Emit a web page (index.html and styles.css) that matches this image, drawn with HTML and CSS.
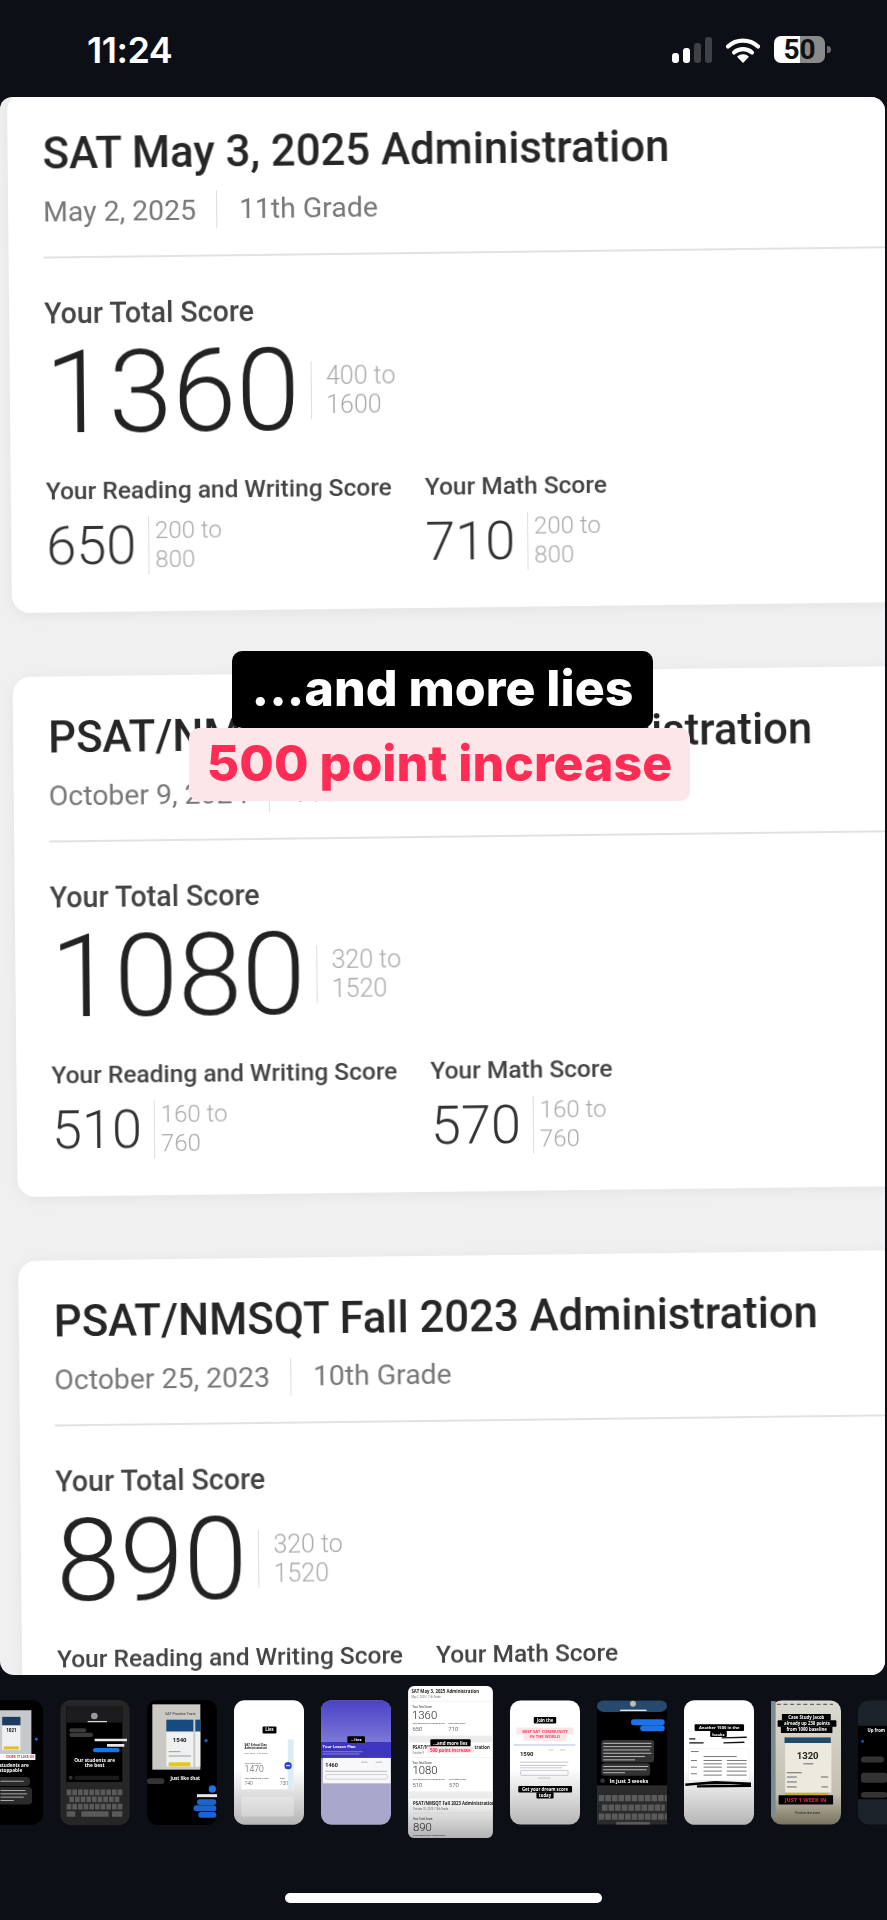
FILE: index.html
```html
<!DOCTYPE html>
<html lang="en">
<head>
    <meta charset="UTF-8">
    <meta name="viewport" content="width=device-width, initial-scale=1.0">
    <title>Story editor</title>
    <link rel="stylesheet" href="styles.css">
</head>
<body>
    <header class="status-bar">
        <span class="status-time">11:24</span>
        <div class="status-icons">
            <svg class="signal" width="40" height="26" viewBox="0 0 40 26">
                <rect x="0" y="16" width="7" height="10" rx="3" fill="#fff"/>
                <rect x="11" y="11" width="7" height="15" rx="3" fill="#fff"/>
                <rect x="22" y="6" width="7" height="20" rx="3" fill="#3e4245"/>
                <rect x="33" y="0" width="7" height="26" rx="3" fill="#3e4245"/>
            </svg>
            <svg class="wifi" width="34" height="26" viewBox="0 0 34 26">
                <path d="M2 9.5 A22 22 0 0 1 32 9.5" fill="none" stroke="#fff" stroke-width="4.2" stroke-linecap="round"/>
                <path d="M8 15.5 A14 14 0 0 1 26 15.5" fill="none" stroke="#fff" stroke-width="4.2" stroke-linecap="round"/>
                <path d="M17 26 L11 19.8 A8.5 8.5 0 0 1 23 19.8 Z" fill="#fff"/>
            </svg>
            <div class="battery">
                <div class="battery-body"><span>50</span></div>
                <div class="battery-nub"></div>
            </div>
        </div>
    </header>

    <main class="stage">
        <div class="card-list">
            <section class="card">
                <h2 class="card-title">SAT May 3, 2025 Administration</h2>
                <div class="card-meta"><span>May 2, 2025</span><span class="grade">11th Grade</span></div>
                <div class="card-rule"></div>
                <div class="total-label">Your Total Score</div>
                <div class="total-row">
                    <span class="total-num">1360</span>
                    <span class="range range-big">400 to<br>1600</span>
                </div>
                <div class="subs">
                    <div class="sub sub-rw">
                        <div class="sub-label">Your Reading and Writing Score</div>
                        <div class="sub-row"><span class="sub-num">650</span><span class="range">200 to<br>800</span></div>
                    </div>
                    <div class="sub">
                        <div class="sub-label">Your Math Score</div>
                        <div class="sub-row"><span class="sub-num">710</span><span class="range">200 to<br>800</span></div>
                    </div>
                </div>
            </section>

            <section class="card">
                <h2 class="card-title">PSAT/NMSQT Fall 2024 Administration</h2>
                <div class="card-meta"><span>October 9, 2024</span><span class="grade">11th Grade</span></div>
                <div class="card-rule"></div>
                <div class="total-label">Your Total Score</div>
                <div class="total-row">
                    <span class="total-num">1080</span>
                    <span class="range range-big">320 to<br>1520</span>
                </div>
                <div class="subs">
                    <div class="sub sub-rw">
                        <div class="sub-label">Your Reading and Writing Score</div>
                        <div class="sub-row"><span class="sub-num">510</span><span class="range">160 to<br>760</span></div>
                    </div>
                    <div class="sub">
                        <div class="sub-label">Your Math Score</div>
                        <div class="sub-row"><span class="sub-num">570</span><span class="range">160 to<br>760</span></div>
                    </div>
                </div>
            </section>

            <section class="card">
                <h2 class="card-title">PSAT/NMSQT Fall 2023 Administration</h2>
                <div class="card-meta"><span>October 25, 2023</span><span class="grade">10th Grade</span></div>
                <div class="card-rule"></div>
                <div class="total-label">Your Total Score</div>
                <div class="total-row">
                    <span class="total-num">890</span>
                    <span class="range range-big">320 to<br>1520</span>
                </div>
                <div class="subs">
                    <div class="sub sub-rw">
                        <div class="sub-label">Your Reading and Writing Score</div>
                    </div>
                    <div class="sub">
                        <div class="sub-label">Your Math Score</div>
                    </div>
                </div>
            </section>
        </div>

        <div class="captions">
            <div class="caption-black">...and more lies</div>
            <div class="caption-pink">500 point increase</div>
        </div>
    </main>

    <div class="strip">
        <!-- thumbnails: viewBox numbers are just the 3x coords I measured -->
        <svg class="thumb" viewBox="-83 90 211 375">
            <rect x="-83" y="90" width="211" height="375" rx="32" fill="#000"/>
            <rect x="-83" y="120" width="176" height="150" fill="#c5c9cc"/>
            <rect x="5" y="140" width="55" height="26" fill="#1d3a5f"/>
            <rect x="5" y="166" width="55" height="74" fill="#eef0f2"/>
            <text x="33" y="186" text-anchor="middle" class="t-num" font-size="14" fill="#111">1021</text>
            <rect x="10" y="229" width="45" height="9" fill="#e0c020"/>
            <circle cx="108" cy="207" r="5" fill="#1a5cc8"/>
            <rect x="-83" y="252" width="188" height="18" fill="#fff"/>
            <text x="102" y="265" text-anchor="end" class="t-bold" font-size="11" fill="#e8264a">DOES IT LIKE US</text>
            <text x="85" y="290" text-anchor="end" class="t-bold" font-size="14" fill="#fff">students are</text>
            <text x="65" y="306" text-anchor="end" class="t-bold" font-size="14" fill="#fff">unstoppable</text>
            <rect x="-83" y="321" width="172" height="27" rx="12" fill="#2b2b2b"/>
            <rect x="-83" y="351" width="178" height="53" rx="12" fill="#2b2b2b"/>
            <path d="M0 334 H70 M0 362 H75 M0 372 H80 M0 382 H70 M0 392 H40" stroke="#aaa" stroke-width="3"/>
        </svg>

        <svg class="thumb" viewBox="180 90 208 375">
            <rect x="180" y="90" width="208" height="375" rx="32" fill="#262626"/>
            <rect x="198" y="108" width="168" height="228" fill="#000"/>
            <rect x="198" y="108" width="168" height="50" fill="#1c1c1e"/>
            <circle cx="282" cy="138" r="10" fill="#9a9a9a"/>
            <path d="M262 155 H320" stroke="#fff" stroke-width="3"/>
            <rect x="207" y="175" width="51" height="12" rx="6" fill="#3a3a3c"/>
            <rect x="207" y="188" width="71" height="13" rx="6" fill="#3a3a3c"/>
            <path d="M283 210 H380 M320 226 H372" stroke="#e8e8e8" stroke-width="8"/>
            <rect x="278" y="234" width="80" height="13" rx="6" fill="#1a73e8"/>
            <text x="283" y="275" text-anchor="middle" class="t-bold" font-size="14.5" fill="#fff">Our students are</text>
            <text x="283" y="292" text-anchor="middle" class="t-bold" font-size="14.5" fill="#fff">the best</text>
            <circle cx="211" cy="323" r="6" fill="#333"/>
            <rect x="222" y="317" width="135" height="13" rx="6" fill="#1a1a1a"/>
            <path d="M199 367 H366 M207 388 H358 M199 410 H366" stroke="#5a5a5a" stroke-width="17" stroke-dasharray="14 3"/>
            <path d="M199 432 H225 M243 432 H325 M335 432 H366" stroke="#5a5a5a" stroke-width="16"/>
        </svg>

        <svg class="thumb" viewBox="440 90 210 375">
            <rect x="440" y="90" width="210" height="375" rx="32" fill="#000"/>
            <rect x="456" y="103" width="144" height="196" fill="#cbc9c4"/>
            <text x="540" y="136" text-anchor="middle" class="t-reg" font-size="11" fill="#333">SAT Practice Tests</text>
            <rect x="498" y="149" width="81" height="36" fill="#174b80"/>
            <rect x="585" y="149" width="15" height="36" fill="#174b80"/>
            <rect x="498" y="185" width="81" height="105" fill="#eef0f2"/>
            <rect x="585" y="185" width="15" height="105" fill="#eef0f2"/>
            <text x="538" y="217" text-anchor="middle" class="t-num" font-size="18" fill="#111">1540</text>
            <path d="M505 245 H540 M505 258 H572" stroke="#999" stroke-width="3"/>
            <rect x="505" y="277" width="65" height="12" fill="#e6c619"/>
            <circle cx="617" cy="212" r="5" fill="#1a5cc8"/>
            <rect x="440" y="325" width="52" height="17" rx="8" fill="#333"/>
            <text x="555" y="329" text-anchor="middle" class="t-bold" font-size="14" fill="#fff">just like that</text>
            <circle cx="636" cy="357" r="11" fill="#1a73e8"/>
            <path d="M590 377 H650" stroke="#e8e8e8" stroke-width="9"/>
            <rect x="590" y="388" width="58" height="17" rx="8" fill="#1a66c8"/>
            <rect x="580" y="406" width="68" height="18" rx="8" fill="#1a66c8"/>
            <rect x="594" y="426" width="54" height="17" rx="8" fill="#1a66c8"/>
        </svg>

        <svg class="thumb" viewBox="700 90 211 375">
            <defs>
                <linearGradient id="fade" x1="0" y1="0" x2="0" y2="1">
                    <stop offset="0.55" stop-color="#fff"/>
                    <stop offset="1" stop-color="#b5b5b5"/>
                </linearGradient>
            </defs>
            <rect x="700" y="90" width="211" height="375" rx="32" fill="url(#fade)"/>
            <rect x="786" y="169" width="42" height="21" rx="3" fill="#000"/>
            <text x="807" y="184" text-anchor="middle" class="t-bold" font-size="13" fill="#fff">Lies</text>
            <rect x="722" y="208" width="158" height="150" rx="4" fill="#fff"/>
            <rect x="862" y="208" width="18" height="150" fill="#dcecf5"/>
            <text x="732" y="228" class="t-bold" font-size="9" fill="#222">SAT School Day</text>
            <text x="732" y="238" class="t-bold" font-size="9" fill="#222">Administration</text>
            <text x="732" y="251" class="t-reg" font-size="7" fill="#666">May 2025 | 11th Grade</text>
            <text x="732" y="282" class="t-reg" font-size="7" fill="#333">Your Total Score</text>
            <text x="732" y="307" class="t-light" font-size="26" fill="#555">1470</text>
            <text x="732" y="327" class="t-reg" font-size="6.5" fill="#333">Your Reading and Writing</text>
            <text x="838" y="327" class="t-reg" font-size="6.5" fill="#333">Math</text>
            <text x="732" y="345" class="t-light" font-size="15" fill="#444">740</text>
            <text x="838" y="345" class="t-light" font-size="15" fill="#444">730</text>
            <circle cx="863" cy="287" r="11" fill="#2d44c8"/>
            <rect x="857" y="285.5" width="12" height="3" fill="#fff"/>
            <rect x="722" y="380" width="158" height="60" rx="6" fill="#fff" opacity="0.3"/>
        </svg>

        <svg class="thumb" viewBox="962 85 215 382">
            <defs>
                <linearGradient id="violet" x1="0" y1="0" x2="0" y2="1">
                    <stop offset="0" stop-color="#4a42c6"/>
                    <stop offset="1" stop-color="#7c78d8"/>
                </linearGradient>
            </defs>
            <rect x="962" y="85" width="215" height="382" rx="32" fill="#a9a7cb"/>
            <path d="M962 213 V117 A32 32 0 0 1 994 85 H1145 A32 32 0 0 1 1177 117 V213 Z" fill="url(#violet)"/>
            <rect x="962" y="213" width="215" height="50" fill="#3f36c0"/>
            <rect x="1043" y="195" width="54" height="21" rx="3" fill="#000"/>
            <text x="1070" y="210" text-anchor="middle" class="t-bold" font-size="13" fill="#fff">...lies</text>
            <text x="967" y="233" class="t-bold" font-size="12" fill="#fff">Your Lesson Plan</text>
            <path d="M967 243 H1090 M967 250 H1080" stroke="#b0acec" stroke-width="2"/>
            <rect x="968" y="262" width="208" height="78" fill="#f8f8fb"/>
            <text x="975" y="291" class="t-num" font-size="17" fill="#222">1460</text>
            <path d="M1085 275 H1105 M1130 275 H1150 M975 303 H1165" stroke="#999" stroke-width="2"/>
            <rect x="976" y="313" width="190" height="14" rx="5" fill="none" stroke="#aaa" stroke-width="1.5"/>
        </svg>

        <svg class="thumb thumb-current" viewBox="1228 48 255 457">
            <defs>
                <linearGradient id="fade-low" x1="0" y1="0" x2="0" y2="1">
                    <stop offset="0.72" stop-color="#000" stop-opacity="0"/>
                    <stop offset="1" stop-color="#000" stop-opacity="0.3"/>
                </linearGradient>
            </defs>
            <rect x="1228" y="48" width="255" height="457" rx="18" fill="#fff"/>
            <rect x="1228" y="197" width="255" height="21" fill="#ececec"/>
            <rect x="1228" y="365" width="255" height="21" fill="#ececec"/>
            <text x="1238" y="69" class="t-bold" font-size="13" fill="#222">SAT May 3, 2025 Administration</text>
            <text x="1238" y="85" class="t-reg" font-size="8" fill="#777">May 2, 2025 | 11th Grade</text>
            <path d="M1238 94 H1483" stroke="#ddd" stroke-width="1"/>
            <text x="1241" y="114" class="t-reg" font-size="8" fill="#333">Your Total Score</text>
            <text x="1240" y="146" class="t-light" font-size="34" fill="#222">1360</text>
            <text x="1241" y="163" class="t-reg" font-size="7" fill="#333">Your Reading and Writing Score</text>
            <text x="1349" y="163" class="t-reg" font-size="7" fill="#333">Your Math Score</text>
            <text x="1241" y="184" class="t-light" font-size="18" fill="#222">650</text>
            <text x="1349" y="184" class="t-light" font-size="18" fill="#222">710</text>
            <text x="1241" y="237" class="t-bold" font-size="13" fill="#222">PSAT/NM</text>
            <text x="1428" y="236" class="t-bold" font-size="13" fill="#222">tration</text>
            <text x="1241" y="253" class="t-reg" font-size="8" fill="#777">October 9</text>
            <path d="M1241 263 H1483" stroke="#ddd" stroke-width="1"/>
            <text x="1241" y="283" class="t-reg" font-size="8" fill="#333">Your Total Score</text>
            <text x="1241" y="314" class="t-light" font-size="34" fill="#222">1080</text>
            <text x="1241" y="332" class="t-reg" font-size="7" fill="#333">Your Reading and Writing Score</text>
            <text x="1351" y="332" class="t-reg" font-size="7" fill="#333">Your Math Score</text>
            <text x="1241" y="353" class="t-light" font-size="18" fill="#222">510</text>
            <text x="1351" y="353" class="t-light" font-size="18" fill="#222">570</text>
            <text x="1243" y="405" class="t-bold" font-size="13" fill="#222">PSAT/NMSQT Fall 2023 Administration</text>
            <text x="1243" y="421" class="t-reg" font-size="8" fill="#777">October 25, 2023 | 10th Grade</text>
            <path d="M1243 430 H1483" stroke="#ddd" stroke-width="1"/>
            <text x="1243" y="451" class="t-reg" font-size="8" fill="#333">Your Total Score</text>
            <text x="1243" y="483" class="t-light" font-size="34" fill="#222">890</text>
            <text x="1243" y="499" class="t-reg" font-size="7" fill="#333">Your Reading and Writing Score</text>
            <rect x="1295" y="208" width="121" height="22" rx="3" fill="#000"/>
            <text x="1355" y="224" text-anchor="middle" class="t-bold" font-size="13.5" fill="#fff">...and more lies</text>
            <rect x="1284" y="230" width="142" height="20" rx="3" fill="#fde6e8"/>
            <text x="1355" y="245" text-anchor="middle" class="t-bold" font-size="13.5" fill="#ff2d55">500 point increase</text>
            <rect x="1228" y="48" width="255" height="457" rx="18" fill="url(#fade-low)"/>
        </svg>

        <svg class="thumb" viewBox="213 88 212 376">
            <rect x="213" y="88" width="212" height="376" rx="32" fill="url(#fade)"/>
            <rect x="285" y="138" width="68" height="20" rx="3" fill="#000"/>
            <text x="319" y="153" text-anchor="middle" class="t-bold" font-size="13" fill="#fff">Join the</text>
            <rect x="232" y="170" width="173" height="21" fill="#fde6e8"/>
            <rect x="254" y="190" width="130" height="20" fill="#fde6e8"/>
            <text x="319" y="186" text-anchor="middle" class="t-bold" font-size="12.5" fill="#ff3a5c">BEST SAT COMMUNITY</text>
            <text x="319" y="203" text-anchor="middle" class="t-bold" font-size="12.5" fill="#ff3a5c">IN THE WORLD</text>
            <path d="M225 223 H411" stroke="#8f96d6" stroke-width="2"/>
            <text x="243" y="255" class="t-num" font-size="18" fill="#222">1590</text>
            <path d="M330 238 H345 M365 238 H380 M243 275 H390 M243 285 H385 M243 292 H370" stroke="#aaa" stroke-width="2"/>
            <rect x="245" y="300" width="144" height="15" rx="3" fill="none" stroke="#9a9ab0" stroke-width="1.5"/>
            <path d="M298 323 H335" stroke="#aaa" stroke-width="2"/>
            <rect x="238" y="347" width="163" height="20" rx="3" fill="#000"/>
            <rect x="293" y="366" width="52" height="19" rx="3" fill="#000"/>
            <text x="319" y="362" text-anchor="middle" class="t-bold" font-size="13" fill="#fff">Get your dream score</text>
            <text x="319" y="380" text-anchor="middle" class="t-bold" font-size="13" fill="#fff">today</text>
        </svg>

        <svg class="thumb" viewBox="475 88 212 376">
            <rect x="475" y="88" width="212" height="376" rx="32" fill="#000"/>
            <rect x="475" y="88" width="212" height="35" rx="20" fill="#27496b"/>
            <circle cx="584" cy="98" r="9" fill="#bbb"/>
            <path d="M545 118 H625" stroke="#e8e8e8" stroke-width="4"/>
            <rect x="578" y="145" width="102" height="18" rx="8" fill="#1a73e8"/>
            <rect x="606" y="163" width="74" height="18" rx="8" fill="#1a73e8"/>
            <rect x="488" y="208" width="160" height="68" rx="10" fill="#333"/>
            <rect x="488" y="278" width="148" height="38" rx="10" fill="#333"/>
            <path d="M494 218 H640 M494 228 H640 M494 238 H635 M494 248 H640 M494 258 H620 M494 268 H590 M494 288 H630 M494 298 H625 M494 307 H560" stroke="#bbb" stroke-width="3"/>
            <circle cx="492" cy="331" r="7" fill="#333"/>
            <text x="513" y="337" class="t-bold" font-size="16" fill="#fff">In just 3 weeks</text>
            <rect x="475" y="345" width="212" height="119" fill="#2b2b2b"/>
            <path d="M480 384 H686 M490 413 H680 M480 440 H686" stroke="#5a5a5a" stroke-width="19" stroke-dasharray="17 3"/>
            <rect x="533" y="456" width="102" height="8" fill="#5a5a5a"/>
        </svg>

        <svg class="thumb" viewBox="736 88 211 376">
            <rect x="736" y="88" width="211" height="376" rx="32" fill="url(#fade)"/>
            <rect x="768" y="161" width="149" height="20" rx="3" fill="#000"/>
            <rect x="815" y="180" width="50" height="19" rx="3" fill="#000"/>
            <text x="842" y="176" text-anchor="middle" class="t-bold" font-size="12.5" fill="#fff">Another 1500 in the</text>
            <text x="840" y="195" text-anchor="middle" class="t-bold" font-size="12.5" fill="#fff">books</text>
            <path d="M850 202 L925 200 M855 217 L918 215 M752 205 H770 M752 217 H795" stroke="#111" stroke-width="4"/>
            <rect x="750" y="235" width="182" height="95" fill="#fff" stroke="#ddd"/>
            <path d="M757 243 H780 M795 258 H895 M795 270 H850 M865 270 H925 M795 280 H850 M865 280 H925 M795 290 H850 M865 290 H925 M795 302 H850 M865 302 H925 M795 314 H850 M865 314 H925 M757 270 H775 M757 290 H775 M757 310 H775" stroke="#777" stroke-width="3"/>
            <path d="M740 343 L830 335 L938 340 M775 348 L938 346" stroke="#000" stroke-width="7"/>
        </svg>

        <svg class="thumb" viewBox="997 88 212 376">
            <defs>
                <linearGradient id="photo" x1="0" y1="0" x2="0" y2="1">
                    <stop offset="0" stop-color="#dcdad0"/>
                    <stop offset="0.75" stop-color="#c3c0b0"/>
                    <stop offset="1" stop-color="#77735f"/>
                </linearGradient>
            </defs>
            <rect x="997" y="88" width="212" height="376" rx="32" fill="url(#photo)"/>
            <path d="M1015 100 H1185" stroke="#666" stroke-width="4" stroke-dasharray="12 8"/>
            <rect x="997" y="90" width="14" height="350" fill="#7d8a92"/>
            <rect x="1030" y="129" width="148" height="20" rx="2" fill="#000"/>
            <rect x="1017" y="148" width="178" height="20" rx="2" fill="#000"/>
            <rect x="1027" y="167" width="156" height="20" rx="2" fill="#000"/>
            <text x="1104" y="144" text-anchor="middle" class="t-bold" font-size="13" fill="#fff">Case Study Jacob</text>
            <text x="1106" y="163" text-anchor="middle" class="t-bold" font-size="13" fill="#fff">already up 230 points</text>
            <text x="1105" y="182" text-anchor="middle" class="t-bold" font-size="13" fill="#fff">from 1090 baseline</text>
            <rect x="1038" y="200" width="140" height="17" fill="#1f4a6a"/>
            <rect x="1040" y="217" width="140" height="150" fill="#eceadf"/>
            <text x="1108" y="266" text-anchor="middle" class="t-num" font-size="29" fill="#222">1320</text>
            <path d="M1095 280 H1125 M1045 307 H1090 M1148 320 H1170 M1045 320 H1075 M1045 335 H1075 M1045 350 H1075 M1150 350 H1170" stroke="#666" stroke-width="3"/>
            <rect x="1040" y="368" width="130" height="30" fill="#d9aa18"/>
            <rect x="1020" y="375" width="165" height="28" rx="2" fill="#000"/>
            <text x="1102" y="395" text-anchor="middle" class="t-bold" font-size="17" fill="#e8264a">JUST 1 WEEK IN</text>
            <text x="1108" y="433" text-anchor="middle" class="t-reg" font-size="9" fill="#222">Practice test score</text>
        </svg>

        <svg class="thumb" viewBox="1257 88 212 376">
            <rect x="1257" y="88" width="212" height="376" rx="32" fill="#1c2229"/>
            <rect x="1257" y="165" width="212" height="222" fill="#000"/>
            <text x="1286" y="183" class="t-bold" font-size="13" fill="#fff">Up from</text>
            <circle cx="1271" cy="212" r="4" fill="#1a5cc8"/>
            <rect x="1266" y="258" width="70" height="18" rx="9" fill="#333"/>
            <rect x="1266" y="307" width="80" height="30" rx="9" fill="#333"/>
            <rect x="1266" y="365" width="80" height="18" rx="9" fill="#333"/>
        </svg>
    </div>

    <div class="home-bar"></div>
</body>
</html>
```

FILE: styles.css
```css
* {
    box-sizing: border-box;
}
html, body {
    margin: 0;
    padding: 0;
}
body {
    width: 887px;
    height: 1920px;
    overflow: hidden;
    background-color: #0c1016;
    font-family: Roboto, "Liberation Sans", sans-serif;
}

/* status bar */
.status-bar {
    height: 97px;
    display: flex;
    align-items: flex-start;
    justify-content: space-between;
    padding: 30px 56px 0 87px;
    color: #fff;
}
.status-time {
    font-family: Inter, Roboto, sans-serif;
    font-size: 36px;
    font-weight: 600;
    line-height: 40px;
    letter-spacing: -0.5px;
}
.status-icons {
    display: flex;
    align-items: center;
    gap: 14px;
    padding-top: 6px;
}
.battery {
    display: flex;
    align-items: center;
    gap: 2px;
}
.battery-body {
    width: 51px;
    height: 27px;
    border-radius: 7px;
    background: linear-gradient(to right, #fff 51%, #8a8a8a 51%);
    color: #111;
    font-size: 28px;
    font-weight: 700;
    line-height: 27px;
    text-align: center;
}
.battery-nub {
    width: 4px;
    height: 7px;
    border-radius: 0 4px 4px 0;
    background-color: #6b6b6b;
}

/* main picture */
.stage {
    position: relative;
    width: 885px;
    height: 1578px;
    overflow: hidden;
    border-radius: 12px 14px 14px 14px;
    background-color: #f0f0f0;
}
.card-list {
    width: 1020px;
    margin-top: -4px;
    margin-left: 7px;
    display: flex;
    flex-direction: column;
    gap: 64px;
    transform: rotate(-0.55deg) skewY(-0.15deg);
    transform-origin: 0 0;
    filter: blur(0.5px);
}
.card {
    height: 520px;
    padding: 36px 0 0 35px;
    border-radius: 18px;
    background-color: #fff;
    box-shadow: 0 2px 14px rgba(0, 0, 0, 0.06);
}
.card-title {
    margin: 0;
    font-size: 43.7px;
    font-weight: 500;
    line-height: 50px;
    color: #262626;
}
.card-meta {
    margin-top: 14px;
    display: flex;
    align-items: center;
    height: 38px;
    font-size: 28.4px;
    color: #777;
}
.grade {
    margin-left: 20px;
    padding-left: 22px;
    line-height: 38px;
    border-left: 1px solid #ddd;
}
.card-rule {
    margin-top: 26px;
    height: 2px;
    background-color: #e2e2e2;
}
.total-label {
    margin-top: 39px;
    font-size: 28.6px;
    font-weight: 500;
    line-height: 32px;
    color: #444;
}
.total-row {
    margin-top: 6px;
    display: flex;
    align-items: center;
}
.total-num {
    font-size: 115px;
    font-weight: 300;
    line-height: 116px;
    color: #222;
}
.range {
    margin-left: 12px;
    padding-left: 6px;
    border-left: 1px solid #ddd;
    font-size: 24px;
    font-weight: 300;
    line-height: 29px;
    color: #aaa;
}
.range-big {
    margin-left: 11px;
    padding-left: 14px;
    font-size: 25px;
    line-height: 29px;
}
.subs {
    margin-top: 25px;
    display: flex;
    gap: 32px;
}
.sub-rw {
    width: 347px;
}
.sub-label {
    font-size: 24.5px;
    font-weight: 500;
    line-height: 30px;
    color: #444;
    white-space: nowrap;
}
.sub-row {
    margin-top: 11px;
    display: flex;
    align-items: center;
}
.sub-num {
    font-size: 54px;
    font-weight: 300;
    line-height: 58px;
    color: #333;
}

/* text stickers */
.captions {
    position: absolute;
    top: 554px;
    left: 0;
    right: 0;
    display: flex;
    flex-direction: column;
    align-items: center;
    font-family: Inter, "Open Sans", sans-serif;
    font-size: 50px;
    font-weight: 800;
}
.caption-black {
    width: 421px;
    height: 77px;
    border-radius: 10px;
    background-color: #000;
    color: #fff;
    line-height: 74px;
    text-align: center;
}
.caption-pink {
    width: 501px;
    height: 73px;
    margin-right: 6px;
    border-radius: 10px;
    background-color: #fde6e8;
    color: #ff2d55;
    line-height: 70px;
    text-align: center;
}

/* thumbnail strip */
.strip {
    height: 152px;
    margin-top: 11px;
    margin-left: -27px;
    display: flex;
    align-items: center;
    gap: 17px;
}
.thumb {
    flex: none;
    width: 70px;
    height: 125px;
    filter: blur(0.5px);
}
.thumb-current {
    width: 85px;
    height: 152px;
}
.t-bold {
    font-family: "Open Sans", sans-serif;
    font-weight: 700;
}
.t-num {
    font-family: Roboto, sans-serif;
    font-weight: 700;
}
.t-reg {
    font-family: Roboto, sans-serif;
    font-weight: 400;
}
.t-light {
    font-family: Roboto, sans-serif;
    font-weight: 300;
}

.home-bar {
    width: 317px;
    height: 10px;
    margin: 55px auto 0;
    border-radius: 5px;
    background-color: #fff;
}
```
